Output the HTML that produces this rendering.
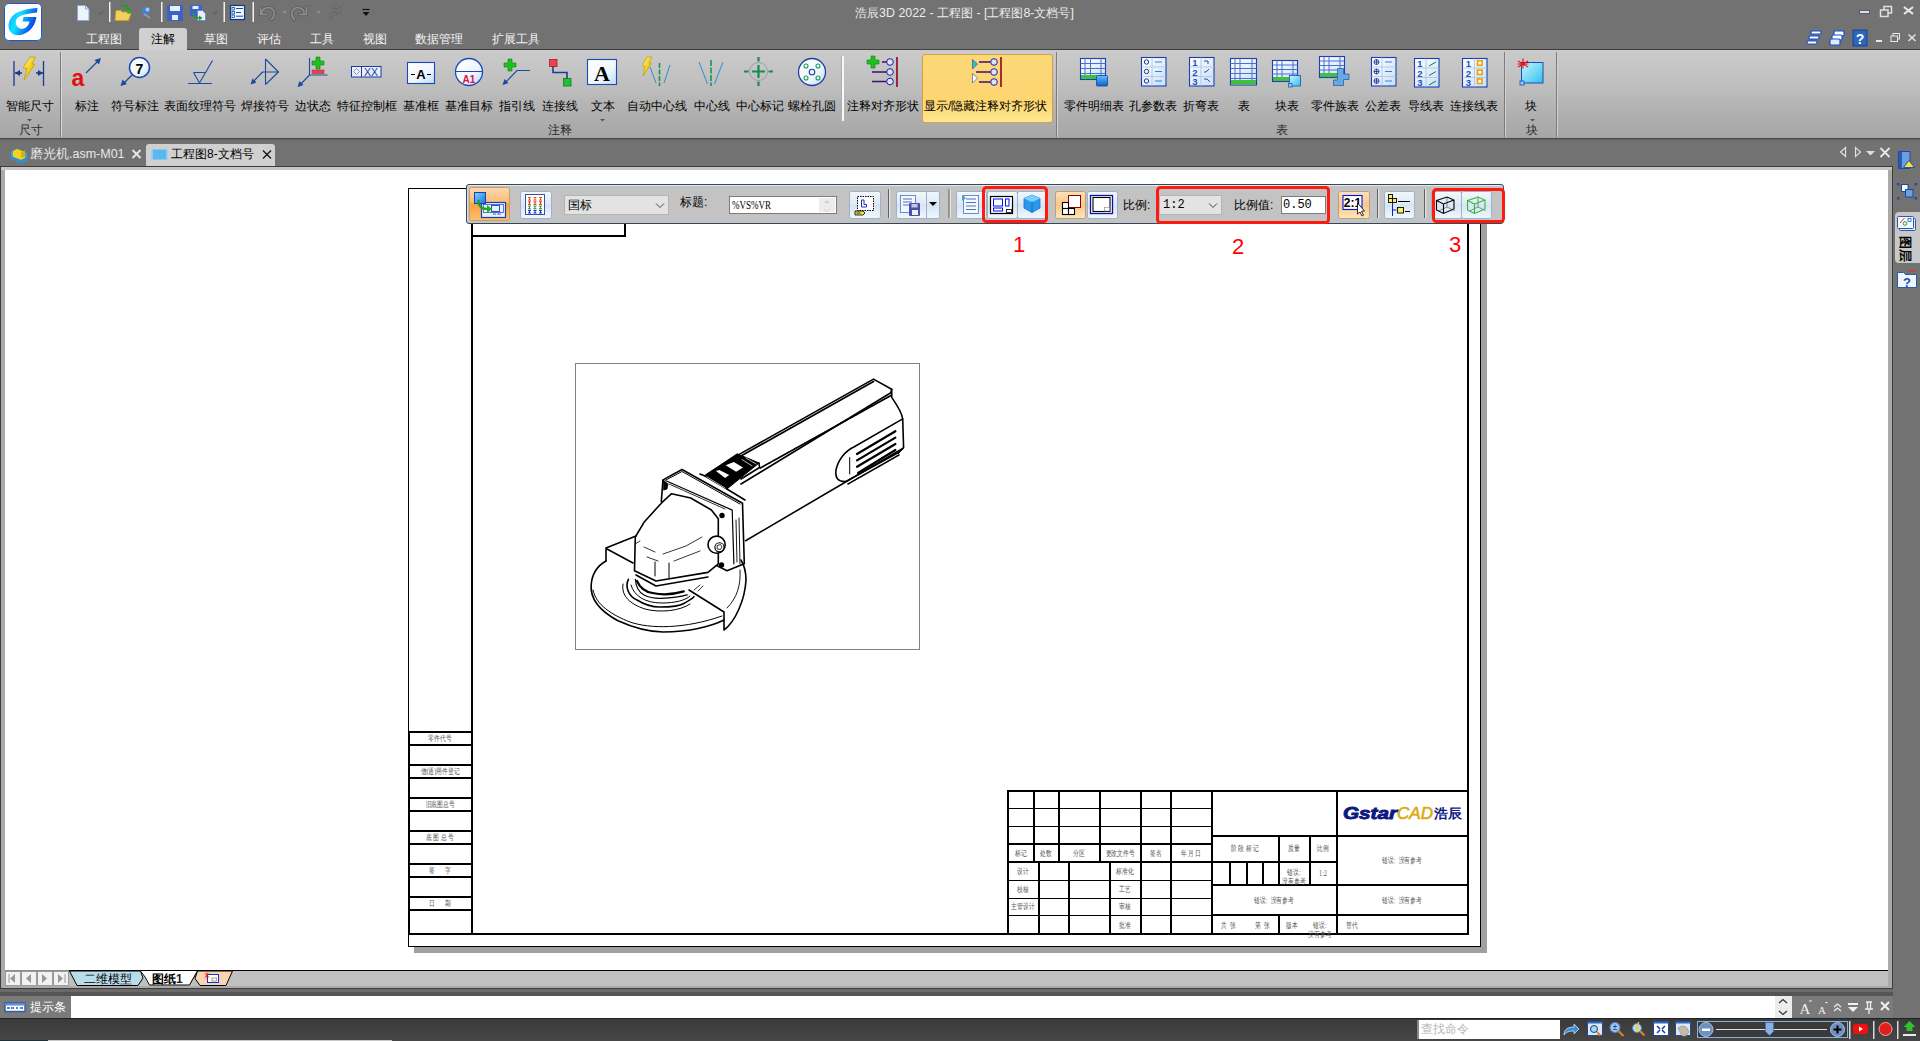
<!DOCTYPE html>
<html><head><meta charset="utf-8">
<style>
*{box-sizing:border-box;margin:0;padding:0}
html,body{width:1920px;height:1041px;overflow:hidden;background:#727272;font-family:"Liberation Sans",sans-serif;font-size:12px;color:#000}
.a{position:absolute}
.t{position:absolute;white-space:nowrap;line-height:14px;font-size:12px}
#titlebar{left:0;top:0;width:1920px;height:49px;background:#727272}
#ribbon{left:0;top:50px;width:1920px;height:88px;background:linear-gradient(#cbcbcb,#bdbdbd 45%,#b4b4b4 62%,#a6a6a6)}
#doctabs{left:0;top:139px;width:1920px;height:27px;background:linear-gradient(#646464,#727272 3px,#727272)}
#canvas{left:0;top:166px;width:1893px;height:804px;background:#fff;border-top:1px solid #3a3a3a;border-left:1px solid #3a3a3a;border-right:1px solid #3a3a3a}
#rightpanel{left:1893px;top:139px;width:27px;height:857px;background:#737373}
</style></head><body>
<div id="titlebar" class="a"></div>
<div class="a" style="left:0;top:49px;width:1920px;height:1px;background:#3f3f3f"></div>
<div id="ribbon" class="a"></div>
<div class="a" style="left:0;top:138px;width:1920px;height:1px;background:#484848"></div>
<div id="doctabs" class="a"></div>
<!-- ===== TITLE BAR ===== -->
<svg class="a" style="left:4px;top:3px" width="38" height="38" viewBox="0 0 38 38">
 <defs><linearGradient id="lg1" x1="0" y1="0.2" x2="1" y2="0.6"><stop offset="0" stop-color="#18a8f8"/><stop offset="0.35" stop-color="#10e4ff"/><stop offset="0.7" stop-color="#0a7af0"/><stop offset="1" stop-color="#0a2ce8"/></linearGradient></defs>
 <rect x="0.5" y="0.5" width="37" height="37" rx="4" fill="#fff" stroke="#1a5ad0" stroke-width="1"/>
 <path d="M33.5 5 C24 5.5 14 7.5 8.5 13 C4 18 3 25 7 29.5 C11 33.5 19 33 25 28 C29 24.5 31.5 20 32.5 14 L19.5 14 L18.5 18.5 L25.5 18.5 C24.5 23.5 21 25.8 18 25.8 C14 25.8 11.8 22.5 11.8 19.5 C11.8 14 17 11 33 9.5 Z" fill="url(#lg1)"/>
</svg>
<!-- quick access -->
<svg class="a" style="left:70px;top:0" width="310" height="26" viewBox="70 0 310 26">
 <!-- new doc -->
 <path d="M77.5 5.5 h8 l3.5 3.5 v11.5 h-11.5z" fill="#eef4fc" stroke="#8aa8d8"/>
 <path d="M85.5 5.5 v3.5 h3.5" fill="none" stroke="#8aa8d8"/>
 <path d="M99 12.5 l1.5 1.5 l2.5 -3" fill="none" stroke="#555" stroke-width="1"/>
 <rect x="109" y="2" width="1.5" height="20" fill="#f0f0f0"/>
 <!-- open folder -->
 <path d="M115 20.5 l1 -10 h5 l1 1.5 h6 l-0.5 1.5 h3.5 l-2.5 7z" fill="#f2d060" stroke="#c8a020"/>
 <path d="M121 6 c5 -1.5 8 1 7.5 5.5" fill="none" stroke="#20a020" stroke-width="2"/>
 <path d="M125 10 l3.5 3.5 l3.5 -3.5z" fill="#20b020"/>
 <!-- globe pin -->
 <circle cx="146" cy="11" r="4" fill="#4a80d0"/><circle cx="147.5" cy="9.5" r="2" fill="#a0c8f0"/>
 <path d="M144 14 l6 4" stroke="#999" stroke-width="2"/>
 <rect x="161" y="2" width="1.5" height="20" fill="#f0f0f0"/>
 <!-- save -->
 <rect x="167" y="5" width="16" height="16" rx="1.5" fill="#3a62c8"/>
 <rect x="170" y="6" width="10" height="5" fill="#e8eef8"/>
 <rect x="172" y="15" width="6" height="5" fill="#e8eef8"/>
 <!-- save as -->
 <rect x="190" y="5" width="12" height="11" rx="1" fill="#3a62c8"/>
 <rect x="192.5" y="6" width="6" height="3" fill="#e8eef8"/>
 <path d="M197.5 10.5 h5 l3 3 v7 h-8z" fill="#e8f0fc" stroke="#6a8ad0"/>
 <path d="M193 13 c0 4 2 5 7 5" fill="none" stroke="#20a020" stroke-width="1.6"/><path d="M199 15.5 l3.5 2.5 l-3.5 2.5z" fill="#20a020"/>
 <path d="M213 12.5 l1.5 1.5 l2.5 -3" fill="none" stroke="#555"/>
 <rect x="223.5" y="2" width="1.5" height="20" fill="#f0f0f0"/>
 <!-- list -->
 <rect x="230.5" y="5.5" width="14" height="14" fill="#f4f8fc" stroke="#0a3a90" stroke-width="1.2"/>
 <rect x="232" y="7.5" width="2.5" height="2.5" fill="none" stroke="#0a50b0" stroke-width="0.8"/><rect x="232" y="11.5" width="2.5" height="2.5" fill="none" stroke="#0a50b0" stroke-width="0.8"/><rect x="232" y="15" width="2.5" height="2.5" fill="none" stroke="#0a50b0" stroke-width="0.8"/>
 <path d="M236 8.5h7M236 12.5h5M236 16.2h7" stroke="#0a50b0"/>
 <rect x="252.5" y="2" width="1.5" height="20" fill="#f0f0f0"/>
 <!-- undo/redo greyed -->
 <g fill="none" stroke-linecap="round" stroke-linejoin="round">
  <path d="M262 14 c-1 -6 8 -9 11.5 -3.5 c2 4 0 7 -2 9" stroke="#5e5e5e" stroke-width="3.4"/>
  <path d="M260.5 8 v6.5 h6.5" stroke="#5e5e5e" stroke-width="3.4"/>
  <path d="M262 14 c-1 -6 8 -9 11.5 -3.5 c2 4 0 7 -2 9" stroke="#8e8e8e" stroke-width="1.6"/>
  <path d="M260.5 8 v6.5 h6.5" stroke="#8e8e8e" stroke-width="1.6"/>
  <path d="M304 14 c1 -6 -8 -9 -11.5 -3.5 c-2 4 0 7 2 9" stroke="#5e5e5e" stroke-width="3.4"/>
  <path d="M306.5 7 v7.5 h-7" stroke="#5e5e5e" stroke-width="3.4"/>
  <path d="M304 14 c1 -6 -8 -9 -11.5 -3.5 c-2 4 0 7 2 9" stroke="#8e8e8e" stroke-width="1.6"/>
  <path d="M306.5 7 v7.5 h-7" stroke="#8e8e8e" stroke-width="1.6"/>
  <path d="M331 17 c0 -3 3 -4 5 -3 M334 8 c3 -2 6 0 5 4" stroke="#5e5e5e" stroke-width="3"/>
  <path d="M331 17 c0 -3 3 -4 5 -3 M334 8 c3 -2 6 0 5 4" stroke="#7c7c7c" stroke-width="1.4"/>
 </g>
 <path d="M282 11 h5 l-2.5 3z" fill="#8c8c8c"/>
 <path d="M316 11 h5 l-2.5 3z" fill="#8c8c8c"/>
 <path d="M362.5 9.5 h7" stroke="#111" stroke-width="1.2"/><path d="M362.5 12 h7 l-3.5 4z" fill="#111"/>
</svg>
<div class="t" style="left:0;top:6px;width:1920px;text-align:center;color:#ececec;font-size:12.4px;padding-left:9px">浩辰3D 2022 - 工程图 - [工程图8-文档号]</div>
<!-- window controls -->
<svg class="a" style="left:1850px;top:0" width="70" height="50" viewBox="1850 0 70 50">
 <rect x="1859.5" y="10.5" width="10" height="3" fill="#e0e0e0" stroke="#4a4a6a" stroke-width="0.8"/>
 <rect x="1884" y="6.5" width="7.5" height="6.5" fill="none" stroke="#e0e0e0" stroke-width="1.5"/>
 <rect x="1880.5" y="10" width="7.5" height="6.5" fill="#727272" stroke="#e0e0e0" stroke-width="1.5"/>
 <path d="M1904 7 l9 7 M1913 7 l-9 7" stroke="#e8e8e8" stroke-width="2.2"/>
 <rect x="1876" y="40" width="6" height="2" fill="#e8e8e8"/>
 <rect x="1893" y="33.5" width="6.5" height="5.5" fill="none" stroke="#e8e8e8" stroke-width="1"/>
 <rect x="1891" y="36" width="6.5" height="5.5" fill="#727272" stroke="#e8e8e8" stroke-width="1"/>
 <path d="M1908.5 34.5 l7 6.5 M1915.5 34.5 l-7 6.5" stroke="#e8e8e8" stroke-width="1.3"/>
</svg>
<svg class="a" style="left:1805px;top:28px" width="65" height="20" viewBox="1805 28 65 20">
 <rect x="1811" y="31" width="10" height="3" rx="1" fill="#fff" stroke="#1050d8" stroke-width="1.2"/>
 <rect x="1809" y="36" width="10" height="3" rx="1" fill="#fff" stroke="#1050d8" stroke-width="1.2"/>
 <rect x="1807" y="41" width="10" height="3" rx="1" fill="#fff" stroke="#1050d8" stroke-width="1.2"/>
 <rect x="1834" y="31" width="10" height="5" rx="1" fill="#fff" stroke="#1050d8" stroke-width="1.2"/>
 <rect x="1832" y="35" width="10" height="5" rx="1" fill="#fff" stroke="#1050d8" stroke-width="1.2"/>
 <rect x="1830" y="39" width="10" height="6" rx="1" fill="#e0ecfc" stroke="#1050d8" stroke-width="1.2"/>
 <rect x="1853" y="30" width="14" height="16" fill="#2a68c0" stroke="#0a3890" stroke-width="0.8"/>
 <text x="1860" y="44" font-family="Liberation Sans" font-weight="bold" font-size="14" fill="#fff" text-anchor="middle">?</text>
</svg>
<!-- ribbon tabs -->
<div class="a" style="left:139px;top:28px;width:48px;height:22px;background:#d0d0d0;border-radius:3px 3px 0 0"></div>
<div class="t" style="left:86px;top:32px;color:#f2f2f2">工程图</div>
<div class="t" style="left:151px;top:32px;color:#000">注解</div>
<div class="t" style="left:204px;top:32px;color:#f2f2f2">草图</div>
<div class="t" style="left:257px;top:32px;color:#f2f2f2">评估</div>
<div class="t" style="left:310px;top:32px;color:#f2f2f2">工具</div>
<div class="t" style="left:363px;top:32px;color:#f2f2f2">视图</div>
<div class="t" style="left:415px;top:32px;color:#f2f2f2">数据管理</div>
<div class="t" style="left:492px;top:32px;color:#f2f2f2">扩展工具</div>

<!-- ===== RIBBON CONTENT ===== -->
<div class="a" style="left:922px;top:54px;width:131px;height:69px;border:1px solid #d4a040;border-radius:3px;background:linear-gradient(#fcd87a,#fdd570 70%,#fde890)"></div>
<div class="a" style="left:60px;top:52px;width:1px;height:85px;background:#7c7c7c"></div>
<div class="a" style="left:61px;top:52px;width:1px;height:85px;background:#d8d8d8"></div>
<div class="a" style="left:841px;top:56px;width:1px;height:65px;background:#a8b0c0"></div>
<div class="a" style="left:842px;top:56px;width:1.5px;height:65px;background:#f8f8f8"></div>
<div class="a" style="left:1056px;top:52px;width:1px;height:85px;background:#7c7c7c"></div>
<div class="a" style="left:1057px;top:52px;width:1px;height:85px;background:#d0d0d0"></div>
<div class="a" style="left:1504px;top:52px;width:1px;height:85px;background:#7c7c7c"></div>
<div class="a" style="left:1505px;top:52px;width:1px;height:85px;background:#d0d0d0"></div>
<div class="a" style="left:1556px;top:52px;width:1px;height:85px;background:#7c7c7c"></div>
<div class="a" style="left:1557px;top:52px;width:1px;height:85px;background:#d0d0d0"></div>
<svg class="a" style="left:0;top:50px" width="1600" height="88" viewBox="0 50 1600 88">
 <defs>
  <linearGradient id="gbolt" x1="0" y1="0" x2="1" y2="1"><stop offset="0" stop-color="#fff6b0"/><stop offset="0.5" stop-color="#f4d020"/><stop offset="1" stop-color="#c89800"/></linearGradient>
  <linearGradient id="gwb" x1="0" y1="0" x2="1" y2="1"><stop offset="0" stop-color="#ffffff"/><stop offset="0.6" stop-color="#f0f6fc"/><stop offset="1" stop-color="#b8dcf8"/></linearGradient>
  <linearGradient id="gcyan" x1="0" y1="0" x2="1" y2="1"><stop offset="0" stop-color="#c8f4ff"/><stop offset="1" stop-color="#30c0f0"/></linearGradient>
  <linearGradient id="gcube" x1="0" y1="0" x2="0" y2="1"><stop offset="0" stop-color="#60c0f8"/><stop offset="1" stop-color="#1060d0"/></linearGradient>
  <linearGradient id="gtbl" x1="0" y1="0" x2="1" y2="1"><stop offset="0" stop-color="#fff"/><stop offset="1" stop-color="#c8e0f8"/></linearGradient>
 </defs>
 <!-- smart dim -->
 <path d="M14 61v25M43.5 61v25" stroke="#1a3a90" stroke-width="1.3"/>
 <path d="M15 73h7M36 73h7" stroke="#1a3a90" stroke-width="1.3"/>
 <path d="M15 73l5 -3v6zM43 73l-5 -3v6z" fill="#1a3a90"/>
 <path d="M30 57 L35.5 57 L32 64 L35 64 L24 80 L27 68 L23 68 Z" fill="url(#gbolt)" stroke="#c8a000" stroke-width="0.8"/>
 <!-- 标注 a -->
 <text x="71.5" y="86" font-family="Liberation Sans" font-weight="bold" font-size="23" fill="#e01010">a</text>
 <path d="M86 73 L99 60" stroke="#1a4aa0" stroke-width="1.2"/><path d="M101 58 l-6.5 2 l4.5 4.5z" fill="#1a4aa0"/>
 <!-- 符号标注 -->
 <circle cx="139.5" cy="67.5" r="10" fill="url(#gwb)" stroke="#1a4ab0" stroke-width="1.5"/>
 <text x="139.5" y="73.5" font-family="Liberation Sans" font-weight="bold" font-size="14" fill="#000" text-anchor="middle">7</text>
 <path d="M132 75 L122 85" stroke="#1a4aa0" stroke-width="1.2"/><path d="M120.5 86 l2 -6.5 l4.5 4.5z" fill="#1a4aa0"/>
 <!-- surface texture -->
 <path d="M188 83.5h24M193.5 72.5h12M193.5 72.5 L199.5 83 L212.5 60.5" fill="none" stroke="#1a4aa0" stroke-width="1.1"/>
 <!-- weld -->
 <path d="M265.5 59v25.5M265.5 59 L278.5 72 L265.5 84.5M262.5 72h16M262.5 72 L252 83" fill="none" stroke="#1a4aa0" stroke-width="1.1"/>
 <path d="M250.5 84.5 l2 -6 l4 4z" fill="#1a4aa0"/>
 <!-- edge state -->
 <path d="M309.5 58v17h18M309.5 75 L299 86" fill="none" stroke="#1a4aa0" stroke-width="1.1"/>
 <path d="M297.5 87 l2 -6 l4 4z" fill="#1a4aa0"/>
 <path d="M316 57h4v4h4v4h-4v4h-4v-4h-4v-4h4z" fill="#20c020" stroke="#108010" stroke-width="0.6"/>
 <rect x="312" y="70" width="12" height="3.5" fill="#e84050" stroke="#b02030" stroke-width="0.5"/>
 <!-- FCF -->
 <rect x="351.5" y="66.5" width="29.5" height="10.5" fill="#e8f0fc" stroke="#1a3aa0" stroke-width="1"/>
 <path d="M361.5 66.5v10.5" stroke="#1a3aa0"/>
 <path d="M356.5 68.5 l3 3 l-3 3 l-3 -3z" fill="none" stroke="#8080c0" stroke-width="0.8"/>
 <text x="371" y="76" font-family="Liberation Sans" font-size="10.5" fill="#1a3aa0" text-anchor="middle">XX</text>
 <!-- datum frame -->
 <rect x="407.5" y="62.5" width="27" height="21" fill="url(#gwb)" stroke="#1a4ab8" stroke-width="1.1"/>
 <text x="421" y="79" font-family="Liberation Sans" font-weight="bold" font-size="13" fill="#000" text-anchor="middle">A</text>
 <path d="M411 74.5h4M427 74.5h4" stroke="#000" stroke-width="1"/>
 <!-- datum target -->
 <circle cx="469" cy="72" r="13.5" fill="url(#gwb)" stroke="#1a4ab8" stroke-width="1.3"/>
 <path d="M455.5 71.5h27" stroke="#1a4ab8" stroke-width="1"/>
 <text x="469" y="82.5" font-family="Liberation Sans" font-weight="bold" font-size="10" fill="#e01040" text-anchor="middle">A1</text>
 <!-- leader -->
 <path d="M508 59h4v4h4v4h-4v4h-4v-4h-4v-4h4z" fill="#20c020" stroke="#108010" stroke-width="0.6"/>
 <path d="M530 70.5h-13 L504 84" fill="none" stroke="#1a4aa0" stroke-width="1.1"/>
 <path d="M502.5 85 l2 -6 l4 4z" fill="#1a4aa0"/>
 <!-- connect line -->
 <path d="M553 66v6.5h14v7" fill="none" stroke="#1a3aa0" stroke-width="1.6"/>
 <rect x="549.5" y="59.5" width="7.5" height="7" fill="#f04050" stroke="#a02020" stroke-width="0.8"/>
 <rect x="563.5" y="78.5" width="7.5" height="7.5" fill="#20c030" stroke="#108010" stroke-width="0.8"/>
 <!-- text A -->
 <rect x="587.5" y="59.5" width="29" height="25" fill="url(#gwb)" stroke="#1a4ab8" stroke-width="1.1"/>
 <text x="602" y="81" font-family="Liberation Serif" font-weight="bold" font-size="22" fill="#000" text-anchor="middle">A</text>
 <!-- auto centerline -->
 <path d="M650 67 L656 83M670 65 L664 83" stroke="#2a90d0" stroke-width="1"/>
 <path d="M659.5 63v23" stroke="#109050" stroke-width="1.5" stroke-dasharray="5 1.5"/>
 <path d="M647 57 L652 57 L649 63 L651.5 63 L643 76 L645 66 L642 66 Z" fill="url(#gbolt)" stroke="#c8a000" stroke-width="0.7"/>
 <!-- centerline -->
 <path d="M699 62 L707.5 84M723 62 L714.5 84" stroke="#2a90d0" stroke-width="1"/>
 <path d="M711 60v26" stroke="#109050" stroke-width="1.5" stroke-dasharray="6 1.5"/>
 <!-- center mark -->
 <circle cx="758.5" cy="71.5" r="9" fill="none" stroke="#a0a0a0" stroke-width="1"/>
 <path d="M758.5 57v4.5M758.5 65v13M758.5 81.5v4.5M744 71.5h4.5M752 71.5h13M768.5 71.5h4.5" stroke="#109050" stroke-width="2.2"/>
 <!-- bolt circle -->
 <circle cx="812" cy="72" r="13.5" fill="url(#gwb)" stroke="#1a40a0" stroke-width="1.3"/>
 <circle cx="812" cy="72" r="2.8" fill="none" stroke="#1a40b0" stroke-width="1.1"/>
 <g fill="none" stroke="#20a050" stroke-width="1.1"><circle cx="806" cy="66" r="2"/><circle cx="818" cy="66" r="2"/><circle cx="806" cy="78" r="2"/><circle cx="818" cy="78" r="2"/></g>
 <!-- align shape -->
 <path d="M871 56h4v4h4v4h-4v4h-4v-4h-4v-4h4z" fill="#20c020" stroke="#108010" stroke-width="0.6"/>
 <path d="M882 62h5M872 72h15M872 81.5h15" stroke="#40106a" stroke-width="1.6"/>
 <g fill="#e0e0ff" stroke="#1a20a0" stroke-width="1"><circle cx="890" cy="62" r="3.3"/><circle cx="890" cy="72" r="3.3"/><circle cx="890" cy="81.5" r="3.3"/></g>
 <path d="M897 57v30" stroke="#900020" stroke-width="1.6"/>
 <!-- show/hide align shape -->
 <path d="M972.5 59.5 L977.5 64 L972.5 69z" fill="#30c0c0" stroke="#2040a0" stroke-width="0.6"/>
 <path d="M972.5 73.5 L977.5 78 L972.5 83z" fill="#fff" stroke="#2040a0" stroke-width="0.6"/>
 <path d="M979 62h13M976 72h16M979 82h13" stroke="#40106a" stroke-width="1.6"/>
 <g fill="#e0e0ff" stroke="#1a20a0" stroke-width="1"><circle cx="994" cy="62" r="3.3"/><circle cx="994" cy="72" r="3.3"/><circle cx="994" cy="82" r="3.3"/></g>
 <path d="M1001 57v30" stroke="#900020" stroke-width="1.6"/>
 <!-- BOM -->
 <g>
  <rect x="1080.5" y="58.5" width="25" height="21" fill="url(#gtbl)" stroke="#1a40b0" stroke-width="1.1"/>
  <path d="M1080.5 63.5h25M1080.5 68.5h25M1080.5 73.5h25M1085 58.5v21M1090.5 58.5v21M1101 58.5v21" stroke="#4a70d0" stroke-width="1"/>
  <rect x="1081" y="75" width="24" height="4" fill="#40c040"/>
  <rect x="1096.5" y="75.5" width="11" height="10.5" rx="1" fill="url(#gcube)" stroke="#1a40a0" stroke-width="0.8"/>
 </g>
 <!-- hole table -->
 <g>
  <rect x="1141.5" y="57.5" width="24.5" height="28.5" fill="url(#gtbl)" stroke="#1a40b0" stroke-width="1.1"/>
  <path d="M1141.5 67h24.5M1141.5 76.5h24.5M1152 57.5v28.5" stroke="#a8c0e0" stroke-width="0.8"/>
  <g fill="none" stroke="#203890" stroke-width="1"><circle cx="1146.5" cy="62" r="2.2"/><circle cx="1146.5" cy="71.5" r="2.2"/><circle cx="1146.5" cy="81" r="2.2"/></g>
  <path d="M1155 62h7M1155 71.5h7M1155 81h7" stroke="#3080e0" stroke-width="1"/>
 </g>
 <!-- bend table -->
 <g>
  <rect x="1189.5" y="57.5" width="24.5" height="28.5" fill="url(#gtbl)" stroke="#1a40b0" stroke-width="1.1"/>
  <path d="M1189.5 67h24.5M1189.5 76.5h24.5M1201 57.5v28.5" stroke="#a8c0e0" stroke-width="0.8"/>
  <g font-family="Liberation Sans" font-weight="bold" font-size="9.5" fill="#2a50c0" text-anchor="middle"><text x="1195" y="66">1</text><text x="1195" y="75.5">2</text><text x="1195" y="85">3</text></g>
  <path d="M1204 61h4v3M1204 72h2l3 -3M1204 79h3l3 3" fill="none" stroke="#203890" stroke-width="0.9"/>
 </g>
 <!-- table -->
 <g>
  <rect x="1230.5" y="58.5" width="26" height="26.5" fill="url(#gtbl)" stroke="#1a40b0" stroke-width="1.1"/>
  <path d="M1230.5 63.5h26M1230.5 68.5h26M1230.5 73.5h26M1230.5 78.5h26M1235 58.5v26.5M1240 58.5v26.5M1252 58.5v26.5" stroke="#4a70d0" stroke-width="1"/>
  <rect x="1231" y="80" width="25" height="4.5" fill="#40c040"/>
 </g>
 <!-- block table -->
 <g>
  <rect x="1272.5" y="60.5" width="25" height="21" fill="url(#gtbl)" stroke="#1a40b0" stroke-width="1.1"/>
  <path d="M1272.5 65h25M1272.5 69.5h25M1272.5 74h25M1277 60.5v21M1282 60.5v21M1293 60.5v21" stroke="#4a70d0" stroke-width="1"/>
  <rect x="1273" y="77" width="24" height="4" fill="#40c040"/>
  <rect x="1289.5" y="75.5" width="11" height="10.5" fill="url(#gcyan)" stroke="#1a50b0" stroke-width="0.8"/>
  <rect x="1288.5" y="83.5" width="3.5" height="3.5" fill="#80d0f8" stroke="#1a50b0" stroke-width="0.7"/>
 </g>
 <!-- part family table -->
 <g>
  <rect x="1319.5" y="56.5" width="25" height="21" fill="url(#gtbl)" stroke="#1a40b0" stroke-width="1.1"/>
  <path d="M1319.5 61h25M1319.5 65.5h25M1319.5 70h25M1324 56.5v21M1329 56.5v21M1340 56.5v21" stroke="#4a70d0" stroke-width="1"/>
  <rect x="1320" y="73" width="24" height="4" fill="#40c040"/>
  <path d="M1337.5 68.5h6v5.5h5.5v5.5h-5.5v6h-10v-5.5h4z" fill="#6aa8e0" stroke="#2a60b0" stroke-width="0.8"/>
 </g>
 <!-- tolerance table -->
 <g>
  <rect x="1371.5" y="57.5" width="24.5" height="28.5" fill="url(#gtbl)" stroke="#1a40b0" stroke-width="1.1"/>
  <path d="M1371.5 67h24.5M1371.5 76.5h24.5M1382 57.5v28.5" stroke="#a8c0e0" stroke-width="0.8"/>
  <g fill="none" stroke="#203890" stroke-width="0.9"><circle cx="1376.5" cy="62" r="2.5"/><circle cx="1376.5" cy="71.5" r="2.5"/><circle cx="1376.5" cy="81" r="2.5"/><path d="M1374 62h5M1376.5 59.5v5M1374 71.5h5M1376.5 69v5M1374 81h5M1376.5 78.5v5"/></g>
  <path d="M1385 62h7M1385 71.5h7M1385 81h7" stroke="#3080e0" stroke-width="1"/>
 </g>
 <!-- wire table -->
 <g>
  <rect x="1414.5" y="58.5" width="24.5" height="28.5" fill="url(#gtbl)" stroke="#1a40b0" stroke-width="1.1"/>
  <path d="M1414.5 68h24.5M1414.5 77.5h24.5M1426 58.5v28.5" stroke="#a8c0e0" stroke-width="0.8"/>
  <g font-family="Liberation Sans" font-weight="bold" font-size="9.5" fill="#2a50c0" text-anchor="middle"><text x="1420" y="67">1</text><text x="1420" y="76.5">2</text><text x="1420" y="86">3</text></g>
  <path d="M1429 66l7 -4M1429 75.5l7 -4M1429 85l7 -4" stroke="#108030" stroke-width="1"/>
 </g>
 <!-- connection table -->
 <g>
  <rect x="1462.5" y="58.5" width="24.5" height="28.5" fill="url(#gtbl)" stroke="#1a40b0" stroke-width="1.1"/>
  <path d="M1462.5 68h24.5M1462.5 77.5h24.5M1474.5 58.5v28.5" stroke="#a8c0e0" stroke-width="0.8"/>
  <g font-family="Liberation Sans" font-weight="bold" font-size="9.5" fill="#2a50c0" text-anchor="middle"><text x="1468.5" y="67">1</text><text x="1468.5" y="76.5">2</text><text x="1468.5" y="86">3</text></g>
  <g fill="#fff" stroke="#f0a000" stroke-width="1.6"><rect x="1477.5" y="60.8" width="4.5" height="4.5"/><rect x="1477.5" y="70" width="4.5" height="4.5"/><rect x="1477.5" y="79" width="4.5" height="4.5"/></g>
 </g>
 <!-- block -->
 <rect x="1521.5" y="62.5" width="21.5" height="20.5" fill="url(#gcyan)" stroke="#1a50b0" stroke-width="1"/>
 <rect x="1520" y="81" width="4" height="4" fill="#80d0f8" stroke="#1a50b0" stroke-width="0.8"/>
 <path d="M1523 58.5v10M1518 61l10 6M1528 61l-10 6M1517.5 64h11" stroke="#f01010" stroke-width="1.2"/>
 <!-- dropdown arrows -->
 <path d="M27 119h5l-2.5 2.5z" fill="#555"/>
 <path d="M600 119h5l-2.5 2.5z" fill="#555"/>
 <path d="M1530 119h5l-2.5 2.5z" fill="#555"/>
</svg>
<div class="t" style="left:6px;top:99px">智能尺寸</div>
<div class="t" style="left:75px;top:99px">标注</div>
<div class="t" style="left:111px;top:99px">符号标注</div>
<div class="t" style="left:164px;top:99px">表面纹理符号</div>
<div class="t" style="left:241px;top:99px">焊接符号</div>
<div class="t" style="left:295px;top:99px">边状态</div>
<div class="t" style="left:337px;top:99px">特征控制框</div>
<div class="t" style="left:403px;top:99px">基准框</div>
<div class="t" style="left:445px;top:99px">基准目标</div>
<div class="t" style="left:499px;top:99px">指引线</div>
<div class="t" style="left:542px;top:99px">连接线</div>
<div class="t" style="left:591px;top:99px">文本</div>
<div class="t" style="left:627px;top:99px">自动中心线</div>
<div class="t" style="left:694px;top:99px">中心线</div>
<div class="t" style="left:736px;top:99px">中心标记</div>
<div class="t" style="left:788px;top:99px">螺栓孔圆</div>
<div class="t" style="left:847px;top:99px">注释对齐形状</div>
<div class="t" style="left:924px;top:99px">显示/隐藏注释对齐形状</div>
<div class="t" style="left:1064px;top:99px">零件明细表</div>
<div class="t" style="left:1129px;top:99px">孔参数表</div>
<div class="t" style="left:1183px;top:99px">折弯表</div>
<div class="t" style="left:1238px;top:99px">表</div>
<div class="t" style="left:1275px;top:99px">块表</div>
<div class="t" style="left:1311px;top:99px">零件族表</div>
<div class="t" style="left:1365px;top:99px">公差表</div>
<div class="t" style="left:1408px;top:99px">导线表</div>
<div class="t" style="left:1450px;top:99px">连接线表</div>
<div class="t" style="left:1525px;top:99px">块</div>
<div class="t" style="left:19px;top:123px;color:#2a2a2a">尺寸</div>
<div class="t" style="left:548px;top:123px;color:#2a2a2a">注释</div>
<div class="t" style="left:1276px;top:123px;color:#2a2a2a">表</div>
<div class="t" style="left:1526px;top:123px;color:#2a2a2a">块</div>

<!-- ===== DOC TABS ===== -->
<svg class="a" style="left:8px;top:145px" width="22" height="20" viewBox="8 145 22 20">
 <path d="M11 152 l6 -3 l10 4 v7 l-6 3 l-10 -4z" fill="#30a8e8"/>
 <path d="M17 149 l8 3 v6 l-4 2 l-8 -3 v-6z" fill="#f8d020"/>
 <path d="M21 152 l4 -1.5 v6 l-4 1.5z" fill="#e0b000"/>
 <path d="M11 152 v4 l10 4 l6 -3 v3 l-6 3 l-10 -4z" fill="#2a90d8"/>
</svg>
<div class="t" style="left:30px;top:147px;color:#e8e8e8;font-size:12.5px">磨光机.asm-M01</div>
<svg class="a" style="left:130px;top:147px" width="14" height="14" viewBox="130 147 14 14"><path d="M132.5 150l8 8M140.5 150l-8 8" stroke="#e8e8e8" stroke-width="1.8"/></svg>
<div class="a" style="left:146px;top:144px;width:129px;height:23px;background:#d0d0d0;border-radius:3px 3px 0 0"></div>
<svg class="a" style="left:150px;top:147px" width="20" height="16" viewBox="150 147 20 16">
 <rect x="152.5" y="149.5" width="14" height="10" fill="#58b8f0"/>
 <path d="M152 149 v11 M167 149 v11" stroke="#90d0f8" stroke-width="1.5"/>
</svg>
<div class="t" style="left:171px;top:147px;color:#000;font-size:12px">工程图8-文档号</div>
<svg class="a" style="left:261px;top:148px" width="14" height="14" viewBox="261 148 14 14"><path d="M263 150.5l8 8M271 150.5l-8 8" stroke="#111" stroke-width="1.3"/></svg>
<svg class="a" style="left:1838px;top:145px" width="55" height="18" viewBox="1838 145 55 18">
 <path d="M1845.5 147.5 v9 l-5 -4.5z" fill="none" stroke="#e0e0e0" stroke-width="1.2"/>
 <path d="M1855.5 147.5 v9 l5 -4.5z" fill="none" stroke="#e0e0e0" stroke-width="1.2"/>
 <path d="M1866 151h9l-4.5 4.5z" fill="#e0e0e0"/>
 <path d="M1880.5 148l9 9M1889.5 148l-9 9" stroke="#e8e8e8" stroke-width="1.8"/>
</svg>
<!-- ===== CANVAS FRAME ===== -->
<div class="a" style="left:0;top:166px;width:1893px;height:823px;background:#3c3c3c"></div>
<div class="a" style="left:1px;top:167px;width:1891px;height:821px;background:#aaaaaa"></div>
<div class="a" style="left:1px;top:167px;width:1891px;height:3px;background:#c6c6c6"></div>
<div class="a" style="left:5px;top:170px;width:1883px;height:800px;background:#fff"></div>
<div class="a" style="left:69px;top:970px;width:1819px;height:1px;background:#000"></div><div class="a" style="left:5px;top:970px;width:64px;height:1px;background:#8a8a8a"></div>
<div class="a" style="left:5px;top:971px;width:1883px;height:15px;background:#c0c0c0"></div>
<div class="a" style="left:0;top:989px;width:1893px;height:3px;background:#6a6a6a"></div>
<div class="a" style="left:0;top:992px;width:1893px;height:4px;background:#555"></div>
<!-- ===== RIGHT PANEL ===== -->
<svg class="a" style="left:1893px;top:139px" width="27" height="160" viewBox="1893 139 27 160">
 <path d="M1898.5 151.5 h11.5 v17 h-11.5z" fill="#6a9ee0" stroke="#1a4aa0" stroke-width="1"/>
 <path d="M1899 152 h3 v16 h-3z" fill="#2a5ab8"/>
 <path d="M1903.5 167.5 l5.5 -7 l5.5 7z" fill="#f8e040" stroke="#1a4aa0" stroke-width="0.9"/>
 <g fill="none" stroke="#1a4aa0" stroke-width="0.9"><rect x="1897.5" y="183.5" width="1.5" height="1.5"/><rect x="1915" y="183.5" width="1.5" height="1.5"/><rect x="1897.5" y="197.5" width="1.5" height="1.5"/><rect x="1915" y="197.5" width="1.5" height="1.5"/></g>
 <rect x="1901.5" y="184.5" width="6.5" height="7" fill="#f4f8fc" stroke="#1a4aa0" stroke-width="1"/>
 <rect x="1905.5" y="189.5" width="7.5" height="7.5" fill="#6aa0e0" stroke="#1a4aa0" stroke-width="1"/>
 <path d="M1895 216 a4 4 0 0 1 4 -4 h21 v51 h-21 a4 4 0 0 1 -4 -4z" fill="#c8c8c8"/>
 <rect x="1899.5" y="218.5" width="16" height="12" rx="1" fill="#e0ecf8" stroke="#2a5ab0" stroke-width="1"/>
 <rect x="1897.5" y="216.5" width="16" height="12" rx="1" fill="#f4f8fc" stroke="#2a5ab0" stroke-width="1"/>
 <path d="M1900 223 l4.5 -5" stroke="#e02020" stroke-width="0.9"/><circle cx="1905" cy="223.5" r="1.8" fill="none" stroke="#20a020" stroke-width="1"/><rect x="1908" y="218.5" width="3" height="3" fill="none" stroke="#2a5ab0" stroke-width="0.8"/>
 <g transform="translate(1900.5,236) rotate(90)"><text x="0" y="0" font-family="Liberation Sans" font-size="12.5" font-weight="bold" fill="#000" style="letter-spacing:-0.5px">图层</text></g>
 <path d="M1897.5 272.5 h6 l2 2 h11 v13 h-19z" fill="#f0f6fc" stroke="#2a5ab0" stroke-width="1"/>
 <path d="M1908 271h8" stroke="#e03030" stroke-width="1.2"/>
 <text x="1907" y="287" font-family="Liberation Sans" font-weight="bold" font-size="13" fill="#1a50b0" text-anchor="middle">?</text>
</svg>
<!-- ===== SHEET ===== -->
<div class="a" style="left:414px;top:194px;width:1073px;height:759px;background:#a0a0a0"></div>
<div class="a" style="left:408px;top:188px;width:1073px;height:759px;background:#fff;border:1px solid #000"></div>
<svg class="a" style="left:400px;top:180px" width="1100" height="780" viewBox="400 180 1100 780" shape-rendering="crispEdges">
 <g fill="#000">
  <!-- inner frame -->
  <rect x="471" y="200" width="2" height="735"/>
  <rect x="1467" y="200" width="2" height="735"/>
  <rect x="408" y="933" width="1061" height="2"/>
  <rect x="471" y="200" width="998" height="2"/>
  <!-- top-left small box -->
  <rect x="472" y="235" width="153" height="2"/>
  <rect x="624" y="200" width="2" height="37"/>
  <!-- left strip rows -->
  <rect x="408" y="731" width="64" height="2"/><rect x="408" y="744" width="64" height="2"/>
  <rect x="408" y="764" width="64" height="2"/><rect x="408" y="777" width="64" height="2"/>
  <rect x="408" y="797" width="64" height="2"/><rect x="408" y="810" width="64" height="2"/>
  <rect x="408" y="830" width="64" height="2"/><rect x="408" y="843" width="64" height="2"/>
  <rect x="408" y="863" width="64" height="2"/><rect x="408" y="876" width="64" height="2"/>
  <rect x="408" y="896" width="64" height="2"/><rect x="408" y="909" width="64" height="2"/>
  <rect x="408" y="731" width="2" height="204"/>
  <!-- title block -->
  <rect x="1007" y="790" width="2" height="145"/>
  <rect x="1007" y="790" width="461" height="2"/>
  <rect x="1009" y="808" width="203" height="1"/>
  <rect x="1009" y="826" width="203" height="1"/>
  <rect x="1009" y="843" width="203" height="2"/>
  <rect x="1009" y="861" width="328" height="2"/>
  <rect x="1009" y="880" width="203" height="1"/>
  <rect x="1009" y="898" width="203" height="1"/>
  <rect x="1009" y="915" width="203" height="1"/>
  <rect x="1033" y="790" width="2" height="72"/>
  <rect x="1058" y="790" width="2" height="72"/>
  <rect x="1099" y="790" width="2" height="72"/>
  <rect x="1140" y="790" width="2" height="144"/>
  <rect x="1170" y="790" width="2" height="144"/>
  <rect x="1211" y="790" width="2" height="144"/>
  <rect x="1038" y="862" width="2" height="72"/>
  <rect x="1068" y="862" width="2" height="72"/>
  <rect x="1109" y="862" width="2" height="72"/>
  <rect x="1212" y="835" width="256" height="2"/>
  <rect x="1212" y="884" width="256" height="2"/>
  <rect x="1212" y="914" width="256" height="2"/>
  <rect x="1336" y="790" width="2" height="144"/>
  <rect x="1278" y="836" width="2" height="49"/>
  <rect x="1278" y="915" width="2" height="19"/>
  <rect x="1309" y="836" width="2" height="49"/>
  <rect x="1229" y="862" width="1.5" height="23"/>
  <rect x="1246" y="862" width="1.5" height="23"/>
  <rect x="1262" y="862" width="1.5" height="23"/>
 </g>
</svg>
<svg class="a" style="left:400px;top:720px" width="1080" height="230" viewBox="400 720 1080 230" font-family="Liberation Serif" fill="#555">
 <g font-size="8.5" text-anchor="middle" style="white-space:pre">
  <text transform="translate(440.0,0) scale(0.72,1)" x="0" y="741">零件代号</text>
  <text transform="translate(440.0,0) scale(0.72,1)" x="0" y="774">借(通)用件登记</text>
  <text transform="translate(440.0,0) scale(0.72,1)" x="0" y="807">旧底图总号</text>
  <text transform="translate(440.0,0) scale(0.72,1)" x="0" y="840">底 图 总 号</text>
  <text transform="translate(440.0,0) scale(0.72,1)" x="0" y="873">签       字</text>
  <text transform="translate(440.0,0) scale(0.72,1)" x="0" y="906">日       期</text>
  <text transform="translate(1020.5,0) scale(0.72,1)" x="0" y="856">标记</text>
  <text transform="translate(1046.0,0) scale(0.72,1)" x="0" y="856">处数</text>
  <text transform="translate(1079.0,0) scale(0.72,1)" x="0" y="856">分区</text>
  <text transform="translate(1120.0,0) scale(0.72,1)" x="0" y="856">更改文件号</text>
  <text transform="translate(1156.0,0) scale(0.72,1)" x="0" y="856">签名</text>
  <text transform="translate(1191.0,0) scale(0.72,1)" x="0" y="856">年 月 日</text>
  <text transform="translate(1023.0,0) scale(0.72,1)" x="0" y="874">设计</text>
  <text transform="translate(1023.0,0) scale(0.72,1)" x="0" y="892">校核</text>
  <text transform="translate(1023.0,0) scale(0.72,1)" x="0" y="909">主管设计</text>
  <text transform="translate(1125.0,0) scale(0.72,1)" x="0" y="874">标准化</text>
  <text transform="translate(1125.0,0) scale(0.72,1)" x="0" y="892">工艺</text>
  <text transform="translate(1125.0,0) scale(0.72,1)" x="0" y="909">审核</text>
  <text transform="translate(1125.0,0) scale(0.72,1)" x="0" y="928">批准</text>
  <text transform="translate(1245.0,0) scale(0.72,1)" x="0" y="851">阶 段 标 记</text>
  <text transform="translate(1294.0,0) scale(0.72,1)" x="0" y="851">质量</text>
  <text transform="translate(1323.0,0) scale(0.72,1)" x="0" y="851">比例</text>
  <text transform="translate(1294.0,0) scale(0.72,1)" x="0" y="875">错误:</text>
  <text transform="translate(1294.0,0) scale(0.72,1)" x="0" y="884">没有参考</text>
  <text transform="translate(1323.0,0) scale(0.72,1)" x="0" y="876">1:2</text>
  <text transform="translate(1274.0,0) scale(0.72,1)" x="0" y="903">错误:  没有参考</text>
  <text transform="translate(1402.0,0) scale(0.72,1)" x="0" y="863">错误:  没有参考</text>
  <text transform="translate(1402.0,0) scale(0.72,1)" x="0" y="903">错误:  没有参考</text>
  <text transform="translate(1228.0,0) scale(0.72,1)" x="0" y="928">共  张</text>
  <text transform="translate(1262.0,0) scale(0.72,1)" x="0" y="928">第  张</text>
  <text transform="translate(1292.0,0) scale(0.72,1)" x="0" y="928">版本</text>
  <text transform="translate(1320.0,0) scale(0.72,1)" x="0" y="928">错误:</text>
  <text transform="translate(1320.0,0) scale(0.72,1)" x="0" y="937">没有参考</text>
 </g>
 <text transform="translate(1346,0) scale(0.72,1)" x="0" y="928" font-size="8.5">替代</text>
</svg>
<!-- logo -->
<svg class="a" style="left:1340px;top:798px" width="125" height="26" viewBox="1340 798 125 26">
 <text x="1343" y="819" font-family="Liberation Sans" font-weight="bold" font-style="italic" font-size="17" fill="#0c1a80" stroke="#0c1a80" stroke-width="0.9" textLength="54" lengthAdjust="spacingAndGlyphs">Gstar</text>
 <text x="1397" y="819" font-family="Liberation Sans" font-style="italic" font-size="17" fill="#d8aa10" stroke="#d8aa10" stroke-width="0.6" textLength="36" lengthAdjust="spacingAndGlyphs">CAD</text>
 <text x="1434" y="818" font-family="Liberation Sans" font-weight="bold" font-size="13" fill="#0c1a80" textLength="28" lengthAdjust="spacingAndGlyphs">浩辰</text>
</svg>
<!-- drawing view -->
<div class="a" style="left:575px;top:363px;width:345px;height:287px;border:1px solid #808080"></div>
<svg class="a" style="left:576px;top:364px" width="343" height="285" viewBox="576 364 343 285" fill="none" stroke="#000" stroke-width="1.6" stroke-linejoin="round" stroke-linecap="round">
 <!-- handle -->
 <path d="M707.3 474.1 L738.3 454.9 L873.5 379.1 L891.7 389.2 L891.7 397.4 C897 405 902 413 902.7 419 L903.6 447.6 L898.1 453.1"/>
 <path d="M873.5 381.5 L738.3 457.5" stroke-width="1.8"/>
 <path d="M741 484 L890.8 392.8 L891.7 389.2"/>
 <path d="M760.3 468 L890.8 395.6" stroke-width="1.7" stroke-dasharray="1.3 0.7"/>
 <path d="M745.6 540.7 L902.7 448.5"/>
 <path d="M902.7 418.9 L854.3 446.7 C845 451 838 460 836 470 C835 478 838 482 846 481.4 L899 452.2"/>
 <path d="M848 484 L899 455" stroke-width="1.6" stroke-dasharray="1.3 0.7"/>
 <path d="M849.7 457.6 V474" stroke-width="1"/>
 <path d="M857 454 L895.4 431.2 M857 460.4 L895.4 437.6 M857 466.8 L895.4 444 M858 473 L895.4 450" stroke-width="2.2"/>
 <!-- switch -->
 <path d="M704.4 475.7 L737.2 453.8 L759.1 463 L726.9 489 Z" fill="#000" stroke-width="1"/>
 <path d="M725.7 465.3 L733.8 461.9 L743 467.6 L736.1 471.7 Z M715.9 471.1 L719.4 470 L729.2 475.1 L725.1 478 Z" fill="#fff" stroke="none"/>
 <path d="M746 458 L756 464 M742 459.5 L752 466" stroke="#fff" stroke-width="0.7"/>
 <path d="M707 477 L725 488" stroke="#fff" stroke-width="0.6"/>
 <path d="M700 474 L704.4 475.7 M726.9 489 L745 500" />
 <path d="M759.1 463 L759.5 467.5 L741 479"/>
 <!-- flange plate -->
 <path d="M661.3 501.5 L663 479.9 L682 469.5 L742.5 503.2 L744.3 563.8 L727 570.7 L716.6 565.5"/>
 <path d="M665 480.5 L682 471.5 L740 504" stroke-width="1"/>
 <path d="M666.5 481 L732.2 510.1 L733.9 563.8" stroke-width="1.2"/>
 <path d="M669 484 L725 509" stroke-width="0.8" stroke-dasharray="1.2 0.6"/>
 <path d="M663 480 L668 484 L667 489 L664 490 Z" fill="#000" stroke-width="0.8"/>
 <circle cx="722" cy="515.5" r="2.7" fill="#000" stroke="none"/>
 <circle cx="721.5" cy="565" r="2.7" fill="#000" stroke="none"/>
 <path d="M736 520 L737 562 M739 518 L740 564" stroke-width="0.9"/>
 <!-- gear housing -->
 <path d="M635.3 537 L634.5 570.7 L656 581 L708 572.4 L718.3 563.8 L718.3 518.8 L711.4 510 L690.7 498 L671.6 493.7 L661.3 503.2 L644 522.3 Z" fill="#fff"/>
 <path d="M635 544 L640 541 M644 547 L655 552 M663 554 L686 546 L702 537 M647 557 L658 561 M674 561 L700 551" stroke-width="0.8"/>
 <path d="M655 562 V576 M669 563 V578" stroke-width="1"/>
 <path d="M636 575 L656 586 L708 577"/>
 <!-- knob -->
 <circle cx="716.6" cy="544.7" r="8.6" fill="#fff"/>
 <circle cx="719.5" cy="547.3" r="4.6" stroke-width="1.1"/>
 <path d="M717.5 545.5 l3 -1 l1.5 2.5 l-1.5 2.5 l-3 -0.5z" stroke-width="0.8"/>
 <!-- spindle rings -->
 <path d="M628.4 579.3 C625 586 628 596 637 600 C645 605 652 607 659.5 607 C670 607 680 606 683.8 603.5 C690 600 694 598 694 596.6"/>
 <path d="M635.3 579.3 C636 587 638 592 644 595 C650 598 656 598.5 661.3 598.3 C670 598 680 597 687.2 594.9" stroke-width="1.2"/>
 <path d="M637 581 C640 588 646 592 652.6 593 C662 595 675 594 683.8 591.4" stroke-width="2.2"/>
 <path d="M631 585 C634 596 645 603 662 603 C676 603 686 600 690 596" stroke-width="1"/>
 <path d="M623 584 C621 596 630 604 645 609 C660 613 680 611 690 604" stroke-width="1"/>
 <!-- guard -->
 <path d="M606 561 L606 548 L636 536"/>
 <path d="M607 549 L633 563"/>
 <path d="M689 590 L724 612 L724 630 C735 622 745 600 746 580 C746 570 744 565 741 560"/>
 <path d="M727 608 C737 598 741 585 740 570" stroke-width="0.9"/>
 <path d="M694 590 L700 585 M698 591 L703 586" stroke-width="0.8"/>
 <!-- disc -->
 <path d="M606 561 C597 566 592 575 591.2 584.5 C590 598 598 610 618 620.8 C634 628 650 632 663 632 C690 632 712 626 724 620"/>
 <path d="M593 590 C596 605 612 615 630 622 C650 629 685 629 722 616" stroke-width="1"/>
</svg>

<!-- ===== FLOATING TOOLBAR ===== -->
<div class="a" style="left:466px;top:184px;width:1038px;height:40px;background:#c3c3c3;border:1px solid #35475a;border-radius:3px;box-shadow:inset 0 1px 0 #e4e8ee,inset 1px 0 0 #d8dce2"></div>
<svg class="a" style="left:466px;top:184px" width="1040" height="42" viewBox="466 184 1040 42">
 <defs>
  <linearGradient id="gbtn" x1="0" y1="0" x2="0" y2="1"><stop offset="0" stop-color="#f2f8fc"/><stop offset="0.45" stop-color="#dfeaf6"/><stop offset="0.5" stop-color="#d6e4f2"/><stop offset="1" stop-color="#f0f8fe"/></linearGradient>
  <linearGradient id="gorg" x1="0" y1="0" x2="0" y2="1"><stop offset="0" stop-color="#fcd8b0"/><stop offset="0.45" stop-color="#fbbc78"/><stop offset="0.5" stop-color="#f8a040"/><stop offset="1" stop-color="#fcc070"/></linearGradient>
  <linearGradient id="gorg2" x1="0" y1="0" x2="0" y2="1"><stop offset="0" stop-color="#fde0b8"/><stop offset="0.5" stop-color="#fbc688"/><stop offset="1" stop-color="#fce8b8"/></linearGradient>
  <linearGradient id="gcube2" x1="0" y1="0" x2="1" y2="1"><stop offset="0" stop-color="#80d8ff"/><stop offset="1" stop-color="#1a70e0"/></linearGradient>
 </defs>
 <!-- B1 orange -->
 <rect x="469.5" y="187.5" width="40" height="33" rx="2" fill="url(#gorg)" stroke="#c8a060" stroke-width="1"/>
 <rect x="481.5" y="202.5" width="24" height="15" fill="#e8f0fc" stroke="#1a40b0" stroke-width="1.2"/>
 <rect x="483.5" y="204.5" width="20" height="8" fill="none" stroke="#2a5ad0" stroke-width="0.8"/>
 <rect x="491.5" y="205.5" width="8" height="6" fill="#e8f0fc" stroke="#1a40b0" stroke-width="0.9"/>
 <path d="M493 214h3M497 214h4" stroke="#1a40b0" stroke-width="0.8"/>
 <rect x="474.5" y="192.5" width="11" height="11" fill="url(#gcube2)" stroke="#1a40b0" stroke-width="1"/>
 <path d="M478.5 200 c0 8 4 9 10 9" fill="none" stroke="#20a020" stroke-width="2.2"/>
 <path d="M487 205 l5 4 l-5 4z" fill="#20b020"/>
 <!-- B2 -->
 <rect x="520.5" y="191.5" width="31" height="27" rx="2" fill="url(#gbtn)" stroke="#a0b0c8" stroke-width="1"/>
 <rect x="525.5" y="194.5" width="19" height="20" fill="#fff" stroke="#3a50a0" stroke-width="1"/>
 <path d="M528.0 197.5h3M529.5 197.5v2.6M528.0 200.1h3M533.5 197.5h3M535 197.5v2.6M533.5 200.1h3M539.0 197.5h3M540.5 197.5v2.6M539.0 200.1h3" stroke="#f05020" stroke-width="1"/><path d="M528.0 201.8h3M529.5 201.8v2.6M528.0 204.4h3M533.5 201.8h3M535 201.8v2.6M533.5 204.4h3M539.0 201.8h3M540.5 201.8v2.6M539.0 204.4h3" stroke="#d84010" stroke-width="1"/><path d="M528.0 206.1h3M529.5 206.1v2.6M528.0 208.7h3M533.5 206.1h3M535 206.1v2.6M533.5 208.7h3M539.0 206.1h3M540.5 206.1v2.6M539.0 208.7h3" stroke="#20a040" stroke-width="1"/><path d="M528.0 210.4h3M529.5 210.4v2.6M528.0 213.0h3M533.5 210.4h3M535 210.4v2.6M533.5 213.0h3M539.0 210.4h3M540.5 210.4v2.6M539.0 213.0h3" stroke="#1020d0" stroke-width="1"/>
 <!-- combo 国标 -->
 <rect x="564.5" y="195.5" width="104" height="19" fill="#e3e3e3" stroke="#b4b4b4" stroke-width="1"/>
 <path d="M656 203.5 l4 4 l4 -4" fill="none" stroke="#444" stroke-width="1"/>
 <!-- title input -->
 <rect x="729.5" y="196.5" width="107" height="17" fill="#fff" stroke="#7c7c7c" stroke-width="1"/>
 <rect x="819" y="198" width="16" height="14" fill="#ececec"/>
 <path d="M824 203 l3 -3 l3 3z" fill="#d0d0d0"/><path d="M824 209 l3 3 l3 -3" fill="none" stroke="#d0d0d0"/>
 <!-- B3 -->
 <rect x="849.5" y="191.5" width="31" height="27" rx="2" fill="url(#gbtn)" stroke="#a0b0c8" stroke-width="1"/>
 <rect x="857.5" y="196.5" width="16" height="14" fill="#fff" stroke="#000" stroke-width="1" stroke-dasharray="1.5 1"/>
 <path d="M861.5 200 v7 h5 v-2.5 h-2.5 v-4.5z" fill="none" stroke="#1a30c0" stroke-width="1"/>
 <path d="M855 211 h8 l2 2 l-2 2 h-8 z" fill="#f8e020" stroke="#000" stroke-width="0.8"/>
 <path d="M856.5 213 h4" stroke="#1a30c0" stroke-width="1"/>
 <rect x="888" y="189" width="1.2" height="29" fill="#606060"/><rect x="889.2" y="189" width="1" height="29" fill="#f0f0f0"/>
 <!-- split button -->
 <rect x="896.5" y="191.5" width="43" height="27" rx="2" fill="url(#gbtn)" stroke="#a0b0c8" stroke-width="1"/>
 <path d="M926.5 192 v26" stroke="#a0b0c8"/>
 <rect x="900.5" y="195.5" width="15" height="17" fill="#f4f8fc" stroke="#5070c0" stroke-width="0.8"/>
 <path d="M903 199h9M903 202h9M903 205h8" stroke="#5070c0" stroke-width="1"/>
 <rect x="909" y="203" width="11" height="13" rx="1" fill="#4a50b0"/><rect x="911.5" y="204" width="6" height="3.5" fill="#c8c8d8"/><rect x="912" y="210" width="6" height="5" fill="#f0f0f0"/>
 <path d="M929 202 h8 l-4 4z" fill="#000"/>
 <rect x="948.5" y="189" width="1.2" height="29" fill="#606060"/><rect x="949.7" y="189" width="1" height="29" fill="#f0f0f0"/>
 <!-- B4 list -->
 <rect x="956.5" y="191.5" width="30" height="27" rx="2" fill="url(#gbtn)" stroke="#a0b0c8" stroke-width="1"/>
 <rect x="963.5" y="195.5" width="15" height="18" fill="#f4f8fc" stroke="#5070c0" stroke-width="0.8"/>
 <path d="M962 195 l4 3 l-4 3z" fill="#40a0d0"/>
 <path d="M966 199h10M966 202.5h10M966 206h10M966 209.5h10" stroke="#5070c0" stroke-width="1"/>
 <!-- B5 layout -->
 <rect x="987.5" y="191.5" width="30" height="27" rx="2" fill="url(#gbtn)" stroke="#a0b0c8" stroke-width="1"/>
 <rect x="990.5" y="196.5" width="22" height="17" fill="#fff" stroke="#000" stroke-width="1.2"/>
 <rect x="993.5" y="199" width="9" height="7" fill="none" stroke="#0010f0" stroke-width="1"/>
 <rect x="1005.5" y="199" width="3.5" height="7" fill="none" stroke="#0010f0" stroke-width="1"/>
 <rect x="993.5" y="208" width="9" height="3" fill="none" stroke="#0010f0" stroke-width="1"/>
 <rect x="1006.5" y="209.5" width="5" height="3" fill="#fff" stroke="#000" stroke-width="0.8"/>
 <!-- B6 cube -->
 <rect x="1017.5" y="191.5" width="29" height="27" rx="2" fill="url(#gbtn)" stroke="#a0b0c8" stroke-width="1"/>
 <path d="M1024 198.5 l8 -3.5 l8 3.5 v9.5 l-8 4.5 l-8 -4.5z" fill="#2a9ae8" stroke="#1070e0" stroke-width="0.8"/>
 <path d="M1024 198.5 l8 3.5 l8 -3.5 l-8 -3.5z" fill="#7ad0ff"/>
 <path d="M1032 202 v10.5" stroke="#1060d0" stroke-width="0.8"/>
 <!-- B7 orange -->
 <rect x="1055.5" y="191.5" width="30" height="27" rx="2" fill="url(#gorg2)" stroke="#b8a080" stroke-width="1"/>
 <rect x="1068.5" y="195.5" width="12" height="12" fill="#fff" stroke="#900000" stroke-width="1"/>
 <g fill="#fff" stroke="#000" stroke-width="1.1"><rect x="1062.5" y="202.5" width="6" height="6"/><rect x="1062.5" y="208.5" width="6" height="6"/><rect x="1068.5" y="208.5" width="6" height="6"/></g>
 <!-- B8 -->
 <rect x="1087.5" y="191.5" width="30" height="27" rx="2" fill="url(#gbtn)" stroke="#a0b0c8" stroke-width="1"/>
 <rect x="1090.5" y="195.5" width="22" height="18" fill="#fff" stroke="#1010a0" stroke-width="1.3"/>
 <rect x="1093" y="197.5" width="17" height="14" fill="#fff" stroke="#000" stroke-width="1.1"/>
 <rect x="1104.5" y="207.5" width="5" height="3.5" fill="#fff" stroke="#888" stroke-width="0.6"/>
 <!-- combo 1:2 -->
 <rect x="1159.5" y="195.5" width="62" height="19" fill="#e3e3e3" stroke="#b4b4b4" stroke-width="1"/>
 <path d="M1209 203.5 l4 4 l4 -4" fill="none" stroke="#444" stroke-width="1"/>
 <!-- input 0.50 -->
 <rect x="1281.5" y="196.5" width="44" height="17" fill="#fff" stroke="#7c7c7c" stroke-width="1"/>
 <!-- B9 orange 2:1 -->
 <rect x="1338.5" y="191.5" width="31" height="27" rx="2" fill="url(#gorg2)" stroke="#b8a080" stroke-width="1"/>
 <rect x="1343" y="195.5" width="19" height="14" fill="#fff" stroke="#0010f0" stroke-width="1.1"/>
 <text x="1352.5" y="207" font-family="Liberation Sans" font-weight="bold" font-size="12" fill="#000" text-anchor="middle">2:1</text>
 <path d="M1357.5 203 v11 l2.5 -2 l2 4 l1.5 -0.8 l-2 -4 l3 -0.2z" fill="#fff" stroke="#000" stroke-width="0.8"/>
 <rect x="1377" y="189" width="1.2" height="29" fill="#606060"/><rect x="1378.2" y="189" width="1" height="29" fill="#f0f0f0"/>
 <!-- B10 tree -->
 <rect x="1384.5" y="191.5" width="30" height="27" rx="2" fill="url(#gbtn)" stroke="#a0b0c8" stroke-width="1"/>
 <path d="M1392.5 202 v14 M1392.5 210 h4" stroke="#1020b0" stroke-width="1"/>
 <g fill="#f8f060" stroke="#000" stroke-width="0.9"><rect x="1388.5" y="194.5" width="4" height="4"/><rect x="1388.5" y="198.5" width="4" height="4"/><rect x="1392.5" y="198.5" width="4" height="4"/><rect x="1397.5" y="207.5" width="6" height="5.5"/></g>
 <path d="M1398 201.5 h12 M1405 211.5 h5" stroke="#000" stroke-width="1"/>
 <rect x="1424" y="189" width="1.2" height="29" fill="#606060"/><rect x="1425.2" y="189" width="1" height="29" fill="#f0f0f0"/>
 <!-- B11 cube wire -->
 <rect x="1431.5" y="191.5" width="30" height="27" rx="2" fill="url(#gbtn)" stroke="#a0b0c8" stroke-width="1"/>
 <g fill="none" stroke-width="1"><path d="M1447 197.5 v9.5 l-8.5 4 M1447 207 l7.5 3.5" stroke="#888"/><path d="M1436.5 200.5 l10.5 -3.5 l7 3 v9 l-10.5 4.5 l-7 -3.5z M1436.5 200.5 l7 3.5 l10.5 -4 M1443.5 204 v9.5" stroke="#000" stroke-width="1.1"/></g>
 <!-- B12 cube green -->
 <rect x="1461.5" y="191.5" width="30" height="27" rx="2" fill="url(#gbtn)" stroke="#a0b0c8" stroke-width="1"/>
 <g fill="none"><path d="M1478 197.5 v9.5 l-8.5 4 M1478 207 l7.5 3.5" stroke="#888" stroke-width="1"/><path d="M1467.5 200.5 l10.5 -3.5 l7 3 v9 l-10.5 4.5 l-7 -3.5z M1467.5 200.5 l7 3.5 l10.5 -4 M1474.5 204 v9.5" stroke="#20c030" stroke-width="1.1"/></g>
 <!-- red boxes -->
 <rect x="983.5" y="187.5" width="63" height="34" rx="3" fill="none" stroke="#ff1a10" stroke-width="3"/>
 <rect x="1157.5" y="187.5" width="171" height="35" rx="3" fill="none" stroke="#ff1a10" stroke-width="3"/>
 <rect x="1433.5" y="189.5" width="70" height="32" rx="3" fill="none" stroke="#ff1a10" stroke-width="3"/>
</svg>
<div class="t" style="left:568px;top:198px;font-size:12px">国标</div>
<div class="t" style="left:680px;top:195px;font-size:12px">标题:</div>
<div class="t" style="left:732px;top:198px;font-family:'Liberation Serif',serif;font-size:12.5px;transform:scaleX(0.72);transform-origin:0 0">%VS%VR</div>
<div class="t" style="left:1123px;top:198px;font-size:12px">比例:</div>
<div class="t" style="left:1163px;top:198px;font-family:'Liberation Mono',monospace;font-size:12px">1:2</div>
<div class="t" style="left:1234px;top:198px;font-size:12px">比例值:</div>
<div class="t" style="left:1283px;top:198px;font-family:'Liberation Mono',monospace;font-size:12px">0.50</div>
<div class="t" style="left:1013px;top:234px;font-size:22px;line-height:22px;color:#ff0000">1</div>
<div class="t" style="left:1232px;top:236px;font-size:22px;line-height:22px;color:#ff0000">2</div>
<div class="t" style="left:1449px;top:234px;font-size:22px;line-height:22px;color:#ff0000">3</div>

<!-- ===== SHEET TABS ===== -->
<svg class="a" style="left:5px;top:970px" width="240" height="17" viewBox="5 970 240 17">
 <g fill="#f2f2f2" stroke="#8a8a8a" stroke-width="0.8"><rect x="5.5" y="971.5" width="15" height="14"/><rect x="21.5" y="971.5" width="15" height="14"/><rect x="37.5" y="971.5" width="15" height="14"/><rect x="53.5" y="971.5" width="15" height="14"/></g>
 <g fill="#999"><rect x="8.5" y="974" width="1" height="9"/><path d="M15 974v9l-5-4.5z"/><path d="M31 974v9l-5-4.5z"/><path d="M42 974v9l5-4.5z"/><path d="M58 974v9l5-4.5z"/><rect x="64.5" y="974" width="1" height="9"/></g>
 <path d="M69.5 971 h71 l2.5 7 l-5 7.5 h-61z" fill="#b8dce8" stroke="#000" stroke-width="1"/>
 <path d="M140.5 971 l4.5 7.5 l4 6.5 h40 l7.5 -14z" fill="#fff"/>
 <path d="M138 985.5 h-0.5 M140.5 971 l4.5 6 l4.5 8 h40 l8 -14" fill="none" stroke="#000" stroke-width="1"/>
 <path d="M197.5 971 h35 l-6.5 14.5 h-26 l-5 -7z" fill="#f8d4b4" stroke="#000" stroke-width="1"/>
 <rect x="207.5" y="974.5" width="11" height="8" fill="#fff" stroke="#1030e0" stroke-width="1"/>
 <path d="M205 973.5 l4 4 M209 973.5 l-4 4 M207 972.5 v6" stroke="#f01010" stroke-width="1"/>
 <rect x="212" y="978" width="4.5" height="3" fill="none" stroke="#888" stroke-width="0.8"/>
</svg>
<div class="t" style="left:84px;top:972px;font-size:12px;color:#000">二维模型</div>
<div class="t" style="left:152px;top:972px;font-size:12px;color:#000;font-weight:bold">图纸<span style="color:#1a1a1a">1</span></div>
<!-- ===== COMMAND LINE ===== -->
<div class="a" style="left:0;top:996px;width:1893px;height:22px;background:#7a7a7a"></div>
<div class="a" style="left:71px;top:996px;width:1704px;height:22px;background:#fff"></div>
<div class="a" style="left:1775px;top:996px;width:17px;height:22px;background:#ececec"></div>
<svg class="a" style="left:4px;top:1001px" width="22" height="12" viewBox="4 1001 22 12">
 <rect x="5" y="1003" width="20" height="8.5" fill="#fff" stroke="#2a5aa8" stroke-width="1.4"/>
 <rect x="5" y="1003" width="20" height="2.5" fill="#5a8ad0"/>
 <path d="M7 1008h3M11 1008h3M16 1008h2M20 1008h3" stroke="#2a5aa8" stroke-width="1.5"/>
</svg>
<div class="t" style="left:30px;top:1000px;color:#fff;font-size:12px">提示条</div>
<svg class="a" style="left:1775px;top:996px" width="118" height="22" viewBox="1775 996 118 22">
 <path d="M1779 1003 l4 -3.5 l4 3.5 M1779 1011 l4 3.5 l4 -3.5" fill="none" stroke="#333" stroke-width="1.2"/>
 <text x="1805" y="1014" font-family="Liberation Serif" font-size="15" fill="#f0f0f0" text-anchor="middle">A</text>
 <path d="M1809 1001 h3" stroke="#f0f0f0" stroke-width="1"/>
 <text x="1822" y="1014" font-family="Liberation Serif" font-size="11" fill="#f0f0f0" text-anchor="middle">A</text>
 <path d="M1825 1002 h3 l-1.5 1.5z" fill="#f0f0f0"/>
 <path d="M1834 1007 l3.5 -3 l3.5 3 M1834 1011 l3.5 -3 l3.5 3" fill="none" stroke="#f0f0f0" stroke-width="1.2"/>
 <rect x="1848" y="1003" width="10" height="2" fill="#f0f0f0"/><path d="M1848 1007 h10 l-5 5z" fill="#f0f0f0"/>
 <path d="M1866 1002 h6 M1867.5 1002 v7 M1870.5 1002 v7 M1865 1009 h8 M1869 1009 v5" stroke="#f0f0f0" stroke-width="1.3"/>
 <path d="M1881 1002 l8 8 M1889 1002 l-8 8" stroke="#f0f0f0" stroke-width="2"/>
</svg>
<!-- ===== STATUS BAR ===== -->
<div class="a" style="left:0;top:1018px;width:1920px;height:1px;background:#222"></div>
<div class="a" style="left:0;top:1019px;width:1920px;height:22px;background:linear-gradient(#3a3a3a,#464646)"></div>
<div class="a" style="left:48px;top:1040px;width:344px;height:1px;background:#c8c8c8"></div>
<div class="a" style="left:0;top:1040px;width:48px;height:1px;background:#1a3038"></div>
<div class="a" style="left:1417px;top:1020px;width:143px;height:19px;background:#fff;border-left:2px solid #888"></div>
<div class="t" style="left:1421px;top:1022px;color:#b8b8b8;font-size:12px">查找命令</div>
<svg class="a" style="left:1560px;top:1019px" width="360" height="22" viewBox="1560 1019 360 22">
 <path d="M1564 1035 c0 -6 4 -8 10 -8 v-3 l5 5 l-5 5 v-3 c-5 0 -8 1 -10 4z" fill="#3a90e0" stroke="#fff" stroke-width="0.6"/>
 <rect x="1587.5" y="1022.5" width="15" height="13" fill="#dce8f8" stroke="#1a4aa0" stroke-width="1"/><rect x="1587.5" y="1021.5" width="15" height="2" fill="#2a6ad0"/>
 <circle cx="1594" cy="1029" r="3.5" fill="#a0d8f8" stroke="#1a3a80" stroke-width="1"/><path d="M1597 1032 l3.5 3.5" stroke="#e08020" stroke-width="2"/>
 <circle cx="1615" cy="1027.5" r="5" fill="#a0c8f0" stroke="#5080c0" stroke-width="1.2"/><path d="M1618.5 1031 l5 5" stroke="#e08020" stroke-width="2.2"/><path d="M1613 1026.5 h4 M1615 1024.5 v4 M1613 1029.5 h4" stroke="#1a3a80" stroke-width="0.8"/>
 <circle cx="1637" cy="1028" r="4.5" fill="#c0d8f0" stroke="#5080c0" stroke-width="1"/><path d="M1640 1031 l4.5 4.5" stroke="#e08020" stroke-width="2.2"/><path d="M1639 1022 l-3 5 h2.5 l-2 5" fill="none" stroke="#f0d020" stroke-width="1.3"/>
 <rect x="1653.5" y="1022.5" width="15" height="13" fill="#fff" stroke="#1a4aa0" stroke-width="1"/><rect x="1653.5" y="1021.5" width="15" height="2" fill="#2a6ad0"/>
 <path d="M1657 1026l3 3M1665 1026l-3 3M1657 1033l3 -3M1665 1033l-3 -3" stroke="#1a3aa0" stroke-width="1.5"/>
 <rect x="1675.5" y="1022.5" width="15" height="13" fill="#dce8f8" stroke="#1a4aa0" stroke-width="1"/><rect x="1675.5" y="1021.5" width="15" height="2" fill="#2a6ad0"/>
 <path d="M1678 1028 c3 -2 6 -3 9 0 l2 4 l-3 4 h-4z" fill="#c8b8a8" stroke="#888" stroke-width="0.6"/>
 <rect x="1697.5" y="1021.5" width="150" height="16" fill="#3a3a3a" stroke="#8ab0e0" stroke-width="1"/>
 <path d="M1716 1029.5 h111" stroke="#e0e0e0" stroke-width="1.2"/>
 <circle cx="1706" cy="1029.5" r="7" fill="#7090c0" stroke="#a0c0e8" stroke-width="1"/><rect x="1702" y="1028.5" width="8" height="2.5" fill="#fff"/>
 <circle cx="1837.5" cy="1029.5" r="7" fill="#7090c0" stroke="#a0c0e8" stroke-width="1"/><path d="M1833.5 1029.5 h8 M1837.5 1025.5 v8" stroke="#000" stroke-width="2"/>
 <path d="M1765.5 1022.5 h8 v9 l-4 4 l-4 -4z" fill="#8ab0e0" stroke="#4a6ab0" stroke-width="0.8"/>
 <rect x="1849" y="1021" width="1.5" height="18" fill="#d8d8d8"/>
 <rect x="1853" y="1024" width="15" height="10" rx="3" fill="#f01010"/><path d="M1859 1026.5 v5 l4 -2.5z" fill="#fff"/>
 <rect x="1873" y="1021" width="1.5" height="18" fill="#d8d8d8"/>
 <circle cx="1885.5" cy="1029" r="6.5" fill="#e02020" stroke="#f0a0a0" stroke-width="1"/>
 <rect x="1897" y="1021" width="1.5" height="18" fill="#d8d8d8"/>
 <path d="M1909.5 1021 l6 6 h-3 v4 h-6 v-4 h-3z" fill="#30c030"/>
 <rect x="1903" y="1034" width="13" height="2" fill="#e8e8e8"/>
</svg>

</body></html>
